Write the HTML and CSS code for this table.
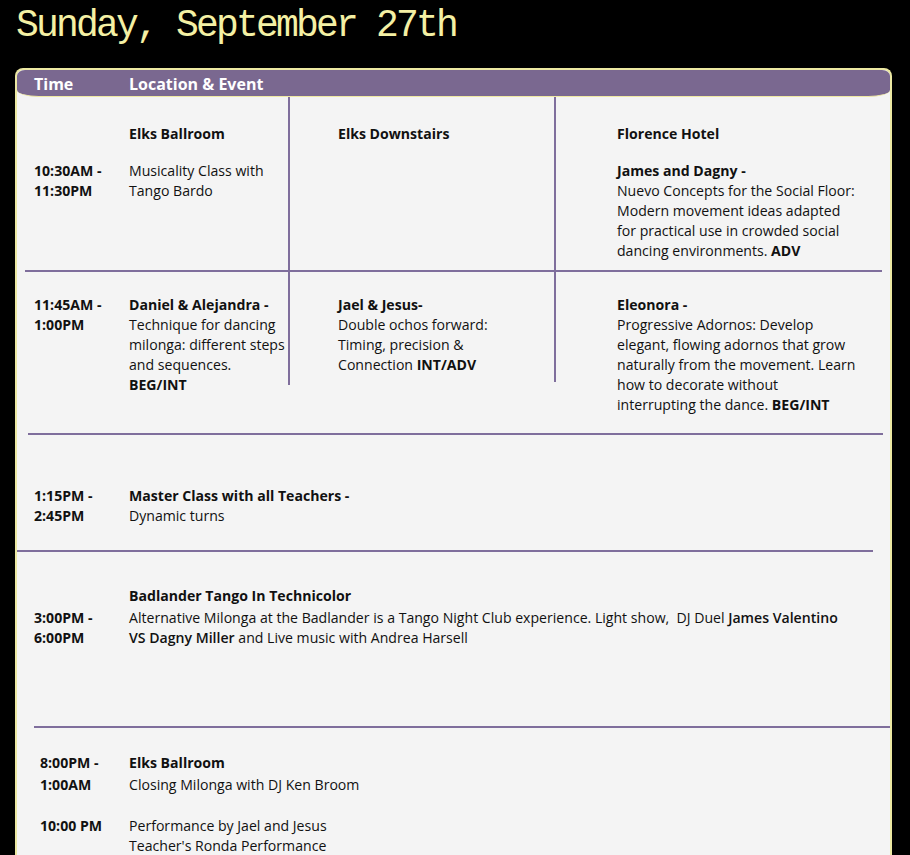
FILE: index.html
```html
<!DOCTYPE html>
<html lang="en">
<head>
<meta charset="utf-8">
<title>Sunday, September 27th</title>
<link rel="stylesheet" href="styles.css">
</head>
<body>
<h1 class="day-title">Sunday, September 27th</h1>

<div class="schedule">
  <div class="head">
    <div class="head-time">Time</div>
    <div class="head-event">Location &amp; Event</div>
  </div>

  <div class="row row-three row-a">
    <div class="time time-a">10:30AM -<br>11:30PM</div>
    <div class="col col-1 col-line">
      <div class="loc">Elks Ballroom</div>
      <div class="desc">Musicality Class with<br>Tango Bardo</div>
    </div>
    <div class="col col-2 col-line">
      <div class="loc">Elks Downstairs</div>
    </div>
    <div class="col col-3">
      <div class="loc">Florence Hotel</div>
      <div class="desc"><b>James and Dagny -</b><br>Nuevo Concepts for the Social Floor:<br>Modern movement ideas adapted<br>for practical use in crowded social<br>dancing environments. <b>ADV</b></div>
    </div>
  </div>

  <div class="sep sep-1"></div>

  <div class="row row-three row-b">
    <div class="time time-b">11:45AM -<br>1:00PM</div>
    <div class="col col-1 col-line col-b1">
      <div class="desc"><b>Daniel &amp; Alejandra -</b><br>Technique for dancing<br>milonga: different steps<br>and sequences.<br><b>BEG/INT</b></div>
    </div>
    <div class="col col-2 col-line col-b2">
      <div class="desc"><b>Jael &amp; Jesus-</b><br>Double ochos forward:<br>Timing, precision &amp;<br>Connection <b>INT/ADV</b></div>
    </div>
    <div class="col col-3 col-b3">
      <div class="desc"><b>Eleonora -</b><br>Progressive Adornos: Develop<br>elegant, flowing adornos that grow<br>naturally from the movement. Learn<br>how to decorate without<br>interrupting the dance. <b>BEG/INT</b></div>
    </div>
  </div>

  <div class="sep sep-2"></div>

  <div class="row row-two row-c">
    <div class="time">1:15PM -<br>2:45PM</div>
    <div class="wide"><b>Master Class with all Teachers -</b><br>Dynamic turns</div>
  </div>

  <div class="sep sep-3"></div>

  <div class="row row-two row-d">
    <div class="time time-d">3:00PM -<br>6:00PM</div>
    <div class="wide">
      <div class="loc">Badlander Tango In Technicolor</div>
      <div class="wide-desc">Alternative Milonga at the Badlander is a Tango Night Club experience. Light show,&nbsp; DJ Duel <b class="semi">James Valentino</b> <b class="semi">VS Dagny Miller</b> and Live music with Andrea Harsell</div>
    </div>
  </div>

  <div class="sep sep-4"></div>

  <div class="row-e">
    <div class="row-two sub-1">
      <div class="time time-e">8:00PM -<br>1:00AM</div>
      <div class="wide"><b>Elks Ballroom</b><br>Closing Milonga with DJ Ken Broom</div>
    </div>
    <div class="row-two sub-2">
      <div class="time time-e2">10:00 PM</div>
      <div class="wide">Performance by Jael and Jesus<br>Teacher's Ronda Performance</div>
    </div>
  </div>
</div>
</body>
</html>
```

FILE: styles.css
```css
html {
  scrollbar-width: none;
}

body {
  margin: 0;
  background: #000;
  font-family: "Open Sans", "Liberation Sans", sans-serif;
  font-size: 14.1px;
  line-height: 20px;
  color: #111;
}

.day-title {
  margin: 0 0 20px 0;
  padding: 4px 0 0 16px;
  font-family: "Liberation Mono", "DejaVu Sans Mono", monospace;
  font-size: 38px;
  line-height: 44px;
  letter-spacing: -2.8px;
  font-weight: normal;
  color: #f4f0a4;
}

.schedule {
  margin: 0 18px 0 15px;
  border: 2px solid #ece8a2;
  border-bottom: none;
  border-radius: 8px 8px 0 0;
  background: #f4f4f4;
  padding-bottom: 40px;
}

.head {
  display: grid;
  grid-template-columns: 112px 1fr;
  align-items: center;
  height: 25px;
  padding-top: 1px;
  background: #7a6890;
  border-bottom: 1px solid #efe9a3;
  border-radius: 8px 8px 22px 22px / 6px 6px 7px 7px;
  color: #fff;
  font-weight: 700;
  font-size: 16px;
}

.head-time {
  padding-left: 17px;
}

.row-three {
  display: grid;
  grid-template-columns: 112px 161px 266px 1fr;
}

.row-two {
  display: grid;
  grid-template-columns: 112px 1fr;
}

.time {
  padding-left: 17px;
  font-weight: 700;
}

.col-line {
  border-right: 2px solid #7f6e9c;
}

.col-2 {
  padding-left: 48px;
  padding-right: 40px;
}

.col-3 {
  padding-left: 61px;
}

.desc {
  white-space: nowrap;
}

.loc {
  font-weight: 700;
}

.row-a {
  height: 173px;
}

.row-a .col {
  padding-top: 27px;
}

.row-a .desc {
  margin-top: 17px;
}

.time-a {
  padding-top: 64px;
}

.sep {
  height: 2px;
  background: #7f6e9c;
}

.sep-1 {
  margin: 0 8px;
}

.row-b {
  height: 161px;
  align-items: start;
}

.row-b > div {
  padding-top: 23px;
  box-sizing: border-box;
}

.col-b1 {
  height: 113px;
}

.col-b2 {
  height: 110px;
}

.sep-2 {
  margin: 0 7px 0 11px;
}

.row-c {
  height: 115px;
  padding-top: 51px;
  box-sizing: border-box;
}

.sep-3 {
  margin: 0 17px 0 0;
}

.row-d {
  height: 174px;
  padding-top: 34px;
  box-sizing: border-box;
}

.time-d {
  padding-top: 22px;
}

.wide-desc {
  margin-top: 2px;
  width: 720px;
}

.semi {
  font-weight: 600;
}

.sep-4 {
  margin: 0 0 0 17px;
}

.row-e {
  padding-top: 24px;
}

.sub-1 {
  line-height: 22px;
}

.time-e,
.time-e2 {
  padding-left: 23px;
}

.sub-2 {
  margin-top: 20px;
}
```
